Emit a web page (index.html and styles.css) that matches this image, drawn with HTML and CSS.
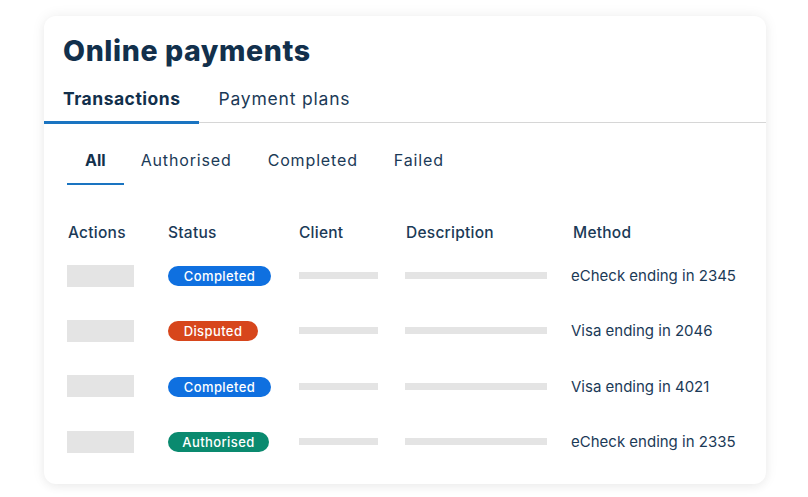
FILE: index.html
```html
<!DOCTYPE html>
<html>
<head>
<meta charset="utf-8">
<link rel="stylesheet" href="styles.css">
</head>
<body>
<div class="card">
  <h1 class="title">Online payments</h1>
  <div class="tabs">
    <div class="tab active">Transactions</div>
    <div class="tab">Payment plans</div>
  </div>
  <div class="subtabs">
    <div class="subtab active">All</div>
    <div class="subtab">Authorised</div>
    <div class="subtab">Completed</div>
    <div class="subtab">Failed</div>
  </div>
  <div class="table">
    <div class="row head">
      <div>Actions</div><div>Status</div><div>Client</div><div>Description</div><div>Method</div>
    </div>
    <div class="row">
      <div><span class="block"></span></div>
      <div><span class="badge blue">Completed</span></div>
      <div><span class="bar client"></span></div>
      <div><span class="bar desc"></span></div>
      <div class="method">eCheck ending in 2345</div>
    </div>
    <div class="row">
      <div><span class="block"></span></div>
      <div><span class="badge red">Disputed</span></div>
      <div><span class="bar client"></span></div>
      <div><span class="bar desc"></span></div>
      <div class="method">Visa ending in 2046</div>
    </div>
    <div class="row">
      <div><span class="block"></span></div>
      <div><span class="badge blue">Completed</span></div>
      <div><span class="bar client"></span></div>
      <div><span class="bar desc"></span></div>
      <div class="method">Visa ending in 4021</div>
    </div>
    <div class="row">
      <div><span class="block"></span></div>
      <div><span class="badge green">Authorised</span></div>
      <div><span class="bar client"></span></div>
      <div><span class="bar desc"></span></div>
      <div class="method">eCheck ending in 2335</div>
    </div>
  </div>
</div>
</body>
</html>
```

FILE: styles.css
```css
* { box-sizing: border-box; }
html, body { margin: 0; padding: 0; background: #ffffff; }
body {
  font-family: "Inter", "Noto Sans", sans-serif;
  color: #13314e;
  padding: 16px 42px 13px 44px;
}
.card {
  width: 722px;
  height: 468px;
  background: #fff;
  border-radius: 12px;
  box-shadow: 0 0 14px rgba(0,0,0,0.07), 0 4px 10px rgba(0,0,0,0.03);
  overflow: hidden;
}
.title {
  margin: 0;
  padding: 16px 0 0 19px;
  font-size: 28.5px;
  font-weight: 800;
  line-height: 38px;
  letter-spacing: 0.6px;
  color: #12304c;
}
.tabs {
  display: flex;
  margin-top: 17px;
  border-bottom: 1px solid #d6d6d6;
  height: 36px;
}
.tab {
  font-size: 17.5px;
  line-height: 24px;
  padding: 0 19px;
  color: #1b3a57;
  letter-spacing: 0.8px;
}
.tab.active {
  font-weight: 700;
  color: #12304c;
  letter-spacing: 0.5px;
  border-bottom: 3px solid #1a74c1;
  margin-bottom: -2px;
}
.subtabs {
  display: flex;
  margin: 15px 0 0 23px;
  height: 47px;
}
.subtab {
  font-size: 16px;
  line-height: 44px;
  padding: 0 18px;
  color: #1b3a57;
  letter-spacing: 0.85px;
}
.subtab.active {
  font-weight: 700;
  color: #12304c;
  letter-spacing: 0;
  padding: 0 18px;
  margin-right: -1px;
  border-bottom: 2px solid #1a74c1;
}
.table {
  padding: 36px 0 0 23px;
}
.row {
  display: grid;
  grid-template-columns: 101px 130px 106px 167px 1fr;
  align-items: center;
  height: 55.3px;
}
.row.head {
  height: 22px;
  margin-bottom: 5px;
  font-size: 15.5px;
  font-weight: 500;
  color: #1b3a57;
  letter-spacing: 0.25px;
}
.row.head > div:nth-child(1) { padding-left: 1px; }
.row.head > div:nth-child(3) { padding-left: 1px; }
.row.head > div:nth-child(4) { padding-left: 2px; }
.row.head > div:nth-child(5) { padding-left: 2px; }
.block {
  display: block;
  width: 67px;
  height: 22px;
  background: #e4e4e4;
}
.badge {
  display: inline-block;
  height: 20px;
  line-height: 20px;
  border-radius: 10px;
  color: #fff;
  font-size: 13px;
  font-weight: 500;
  text-align: center;
  letter-spacing: 0.4px;
}
.badge.blue { background: #0f70e0; width: 103px; }
.badge.red { background: #d7461c; width: 90px; }
.badge.green { background: #0a8a6f; width: 101px; }
.bar {
  display: block;
  height: 7px;
  background: #e4e4e4;
}
.bar.client { width: 79px; margin-left: 1px; }
.bar.desc { width: 142px; margin-left: 1px; }
.method {
  font-size: 15px;
  color: #1b3a57;
  padding-left: 0;
}
```
